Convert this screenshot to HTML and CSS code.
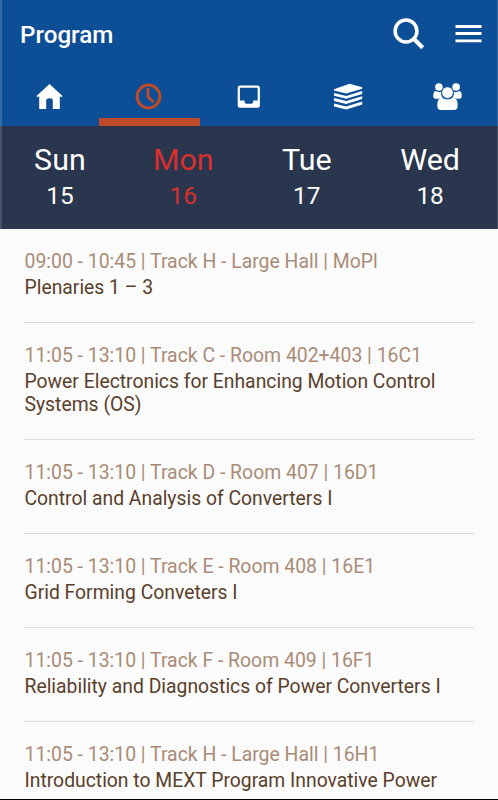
FILE: index.html
```html
<!DOCTYPE html>
<html lang="en">
<head>
    <meta charset="UTF-8">
    <meta name="viewport" content="width=device-width, initial-scale=1.0">
    <title>Program</title>
    <link rel="stylesheet" href="styles.css">
</head>
<body>
    <header>
        <div class="title-bar">
            <h1>Program</h1>
            <svg class="search" width="32" height="32" viewBox="0 0 32 32">
                <circle cx="13" cy="13" r="10.9" fill="none" stroke="#fff" stroke-width="3.5"/>
                <path d="M20.3 20.3L29.7 29.7" stroke="#fff" stroke-width="4.2"/>
            </svg>
            <svg class="menu" width="27" height="20" viewBox="0 0 27 20">
                <path d="M.5 2.5H26.5M.5 9.5H26.5M.5 16.8H26.5" stroke="#fff" stroke-width="2.8"/>
            </svg>
        </div>
        <nav>
            <a class="tab">
                <svg width="28" height="28" viewBox="0 0 28 28" fill="#fff">
                    <path d="M13.5 1L26.5 13L25.5 14.2L23.8 13.2V26H16.8V17.5Q16.8 15.2 13.5 15.2Q10.2 15.2 10.2 17.5V26H3.2V13.2L1.5 14.2L.5 13Z"/>
                </svg>
            </a>
            <a class="tab active">
                <svg width="28" height="28" viewBox="0 0 28 28" fill="none" stroke="#bf4a27">
                    <circle cx="13.5" cy="13.5" r="11.4" stroke-width="3"/>
                    <path d="M13 5V13.8L18.8 19.3" stroke-width="2.8"/>
                </svg>
            </a>
            <a class="tab">
                <svg width="28" height="28" viewBox="0 0 28 28">
                    <rect x="3.8" y="3.7" width="20" height="20" rx="1.2" fill="none" stroke="#fff" stroke-width="2.2"/>
                    <path d="M4 17.5H9.6V19Q9.8 20.8 11.3 20.8H16.5Q18 20.8 18.2 19V17.5H24V24H4Z" fill="#fff"/>
                </svg>
            </a>
            <a class="tab">
                <svg width="30" height="28" viewBox="0 0 30 28" fill="#fff">
                    <path d="M0 6.2L15.5 .8L28.2 4.2V5.7L12.2 10.4L0 7.6Z"/>
                    <path d="M0 10L12.2 12.9L28.2 8.1V10.9L12.2 15.8L0 12.8Z"/>
                    <path d="M0 15.1L12.2 18L28.2 13.2V16.1L12.2 21L0 17.9Z"/>
                    <path d="M0 20.4L12.2 23.4L28.2 18.5V21.5L12.2 26.6L0 23.4Z"/>
                </svg>
            </a>
            <a class="tab">
                <svg width="30" height="28" viewBox="0 0 30 28" fill="#fff">
                    <circle cx="5.9" cy="4" r="3.8"/>
                    <circle cx="23.1" cy="4" r="3.8"/>
                    <path d="M2.5 8Q6 10 8.5 8.5Q7.4 13 9.9 14.8Q7 14.8 5.5 15.8H2.5Q.3 15.8 .3 13Q.3 8.6 2.5 8Z"/>
                    <path d="M26.5 8Q23 10 20.5 8.5Q21.6 13 19.1 14.8Q22 14.8 23.5 15.8H26.5Q28.7 15.8 28.7 13Q28.7 8.6 26.5 8Z"/>
                    <circle cx="14.5" cy="9.6" r="5.8" stroke="#0c4f96" stroke-width=".8"/>
                    <path d="M9 14.8Q14.5 18.2 20 14.8C23.7 14.5 24.7 18.5 24.7 22.8Q24.7 27 21 27H8Q4.3 27 4.3 22.8C4.3 18.5 5.3 14.5 9 14.8Z"/>
                </svg>
            </a>
        </nav>
        <div class="days">
            <div class="day"><span class="name">Sun</span><span class="date">15</span></div>
            <div class="day selected"><span class="name">Mon</span><span class="date">16</span></div>
            <div class="day"><span class="name">Tue</span><span class="date">17</span></div>
            <div class="day"><span class="name">Wed</span><span class="date">18</span></div>
        </div>
    </header>
    <main>
        <div class="session">
            <p class="meta">09:00 - 10:45 | Track H - Large Hall | MoPl</p>
            <p class="name">Plenaries 1 – 3</p>
        </div>
        <div class="session">
            <p class="meta">11:05 - 13:10 | Track C - Room 402+403 | 16C1</p>
            <p class="name">Power Electronics for Enhancing Motion Control Systems (OS)</p>
        </div>
        <div class="session">
            <p class="meta">11:05 - 13:10 | Track D - Room 407 | 16D1</p>
            <p class="name">Control and Analysis of Converters I</p>
        </div>
        <div class="session">
            <p class="meta">11:05 - 13:10 | Track E - Room 408 | 16E1</p>
            <p class="name">Grid Forming Conveters I</p>
        </div>
        <div class="session">
            <p class="meta">11:05 - 13:10 | Track F - Room 409 | 16F1</p>
            <p class="name">Reliability and Diagnostics of Power Converters I</p>
        </div>
        <div class="session">
            <p class="meta">11:05 - 13:10 | Track H - Large Hall | 16H1</p>
            <p class="name">Introduction to MEXT Program Innovative Power</p>
        </div>
    </main>
</body>
</html>
```
FILE: styles.css
```css
* {
    box-sizing: border-box;
}
body {
    font-family: Roboto, sans-serif;
    background-color: #fbfbfb;
    margin: 0;
    height: 100vh;
    display: flex;
    flex-direction: column;
    overflow: hidden;
    border-bottom: 1px solid #000;
}
header {
    background-color: #0c4f96;
    color: #fff;
    flex-shrink: 0;
    box-shadow: inset 2px 0 #326ba7, inset -1px 0 #326ba7;
}
.title-bar {
    display: flex;
    align-items: center;
    height: 68px;
    padding: 0 16px 0 20px;
}
h1 {
    margin: 0;
    padding-top: 2px;
    flex-grow: 1;
    font-size: 24.2px;
    font-weight: 500;
}
.search {
    margin-right: 30px;
}
nav {
    display: grid;
    grid-template-columns: repeat(5, 1fr);
    height: 58px;
}
.tab {
    display: flex;
    justify-content: center;
    padding-top: 15px;
}
.tab.active {
    margin: 0 -.4px;
    border-bottom: 8px solid #bf4a27;
}
.days {
    display: flex;
    justify-content: space-between;
    height: 103px;
    padding: 15px 8.4px 0 .4px;
    background-color: #29364d;
    box-shadow: inset 2px 0 #48536a, inset -1px 0 #48536a;
}
.day {
    width: 119px;
    display: flex;
    flex-direction: column;
    align-items: center;
}
.day .name {
    font-size: 30.4px;
    line-height: 37px;
}
.day .date {
    font-size: 24.4px;
    line-height: 36px;
}
.day.selected {
    color: #d9302e;
}
main {
    flex: 1;
    min-height: 0;
    overflow: hidden;
    padding: 0 24px;
}
.session {
    border-bottom: 1px solid #dcdcdc;
    padding: 19px 0 23.15px .5px;
    font-size: 19.4px;
}
.session p {
    margin: 0;
}
.session .meta {
    line-height: 27.9px;
    color: #a98c77;
}
.session .name {
    font-size: 19.33px;
    line-height: 23px;
    color: #5a402b;
}
```
